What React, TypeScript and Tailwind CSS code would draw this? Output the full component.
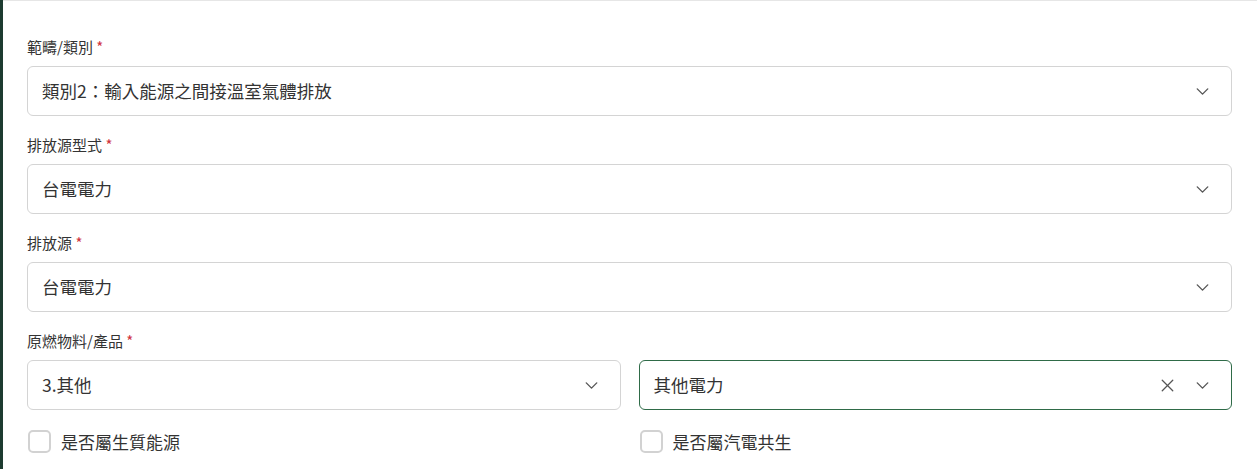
import { ChevronDown, X } from "lucide-react";

const FONT = { fontFamily: '"Noto Sans CJK TC", "Noto Sans", sans-serif' };

function Label({ text }: { text: string }) {
  return (
    <div className="h-5 mb-[9px] text-[15px] leading-5 text-[#333]">
      {text} <span className="text-[#d0343d]">*</span>
    </div>
  );
}

function Select({ value, clearable, active }: { value: string; clearable?: boolean; active?: boolean }) {
  return (
    <div
      className={
        "h-[50px] flex items-center rounded-md border bg-white pl-[14px] pr-[18px] " +
        (active ? "border-[#2f6b48]" : "border-[#d4d4d4]")
      }
    >
      <span className="flex-1 text-[17.5px] text-[#333]">{value}</span>
      {clearable && <X size={21} strokeWidth={1.5} className="text-[#555] mr-[14px]" />}
      <ChevronDown size={21} strokeWidth={1.6} className="text-[#555]" />
    </div>
  );
}

function Check({ text }: { text: string }) {
  return (
    <label className="flex items-center gap-[10px] pl-[1px]">
      <span className="w-[23px] h-[23px] rounded-[5px] border-2 border-[#d2d2d2] bg-white" />
      <span className="text-[17px] text-[#333]">{text}</span>
    </label>
  );
}

export default function App() {
  return (
    <div className="flex w-[1257px] h-[469px] bg-white overflow-hidden" style={FONT}>
      <div className="w-[3px] bg-[#1d3b30] shrink-0" />
      <div className="flex-1 border-t border-[#e6e6e6] pl-[24px] pr-[25px] pt-[36px]">
        <Label text="範疇/類別" />
        <Select value="類別2：輸入能源之間接溫室氣體排放" />
        <div className="h-[19px]" />
        <Label text="排放源型式" />
        <Select value="台電電力" />
        <div className="h-[19px]" />
        <Label text="排放源" />
        <Select value="台電電力" />
        <div className="h-[19px]" />
        <Label text="原燃物料/產品" />
        <div className="grid grid-cols-2 gap-[18px]">
          <Select value="3.其他" />
          <Select value="其他電力" clearable active />
        </div>
        <div className="grid grid-cols-2 gap-[18px] mt-[19px]">
          <Check text="是否屬生質能源" />
          <Check text="是否屬汽電共生" />
        </div>
      </div>
    </div>
  );
}
